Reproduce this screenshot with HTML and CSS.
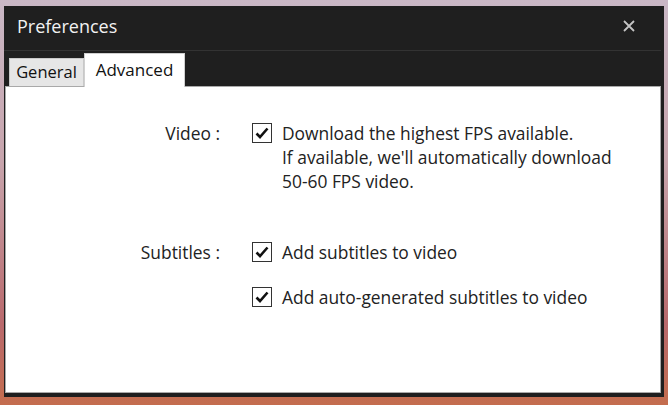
FILE: index.html
```html
<!DOCTYPE html>
<html lang="en">
<head>
    <meta charset="UTF-8">
    <meta name="viewport" content="width=device-width, initial-scale=1.0">
    <title>Preferences</title>
    <link rel="stylesheet" href="styles.css">
</head>
<body>
    <div class="window">
        <div class="titlebar">
            <span class="title">Preferences</span>
            <svg class="close" width="12" height="12" viewBox="0 0 12 12"><path d="M1 1 L11 11 M11 1 L1 11" stroke="#c4c4c4" stroke-width="1.8"/></svg>
        </div>
        <div class="tabs">
            <div class="tab">General</div>
            <div class="tab active">Advanced</div>
        </div>
        <div class="panel">
            <div class="row">
                <div class="label">Video :</div>
                <div class="options">
                    <div class="option">
                        <span class="box">
                            <svg width="14" height="14" viewBox="0 0 14 14"><path d="M1.5 7.5 L5 11 L12.5 2.5" fill="none" stroke="#111" stroke-width="2.6"/></svg>
                        </span>
                        <span class="text">Download the highest FPS available.<br>If available, we'll automatically download<br>50-60 FPS video.</span>
                    </div>
                </div>
            </div>
            <div class="row subs">
                <div class="label">Subtitles :</div>
                <div class="options">
                    <div class="option">
                        <span class="box">
                            <svg width="14" height="14" viewBox="0 0 14 14"><path d="M1.5 7.5 L5 11 L12.5 2.5" fill="none" stroke="#111" stroke-width="2.6"/></svg>
                        </span>
                        <span class="text">Add subtitles to video</span>
                    </div>
                    <div class="option">
                        <span class="box">
                            <svg width="14" height="14" viewBox="0 0 14 14"><path d="M1.5 7.5 L5 11 L12.5 2.5" fill="none" stroke="#111" stroke-width="2.6"/></svg>
                        </span>
                        <span class="text">Add auto-generated subtitles to video</span>
                    </div>
                </div>
            </div>
        </div>
    </div>
</body>
</html>
```

FILE: styles.css
```css
body{
    margin: 0;
    height: 405px;
    overflow: hidden;
    background: linear-gradient(180deg, #cab8c6 0%, #c7a4ac 40%, #b9696c 80%, #c46d4e 100%);
    font-family: "Open Sans", "Noto Sans", sans-serif;
}
.window{
    margin: 6px 4px 0 4px;
    height: 391px;
    background-color: #1f1f1f;
    display: flex;
    flex-direction: column;
    padding-right: 3px;
    padding-bottom: 4px;
    box-sizing: border-box;
}
.titlebar{
    height: 44px;
    display: flex;
    align-items: center;
    justify-content: space-between;
    padding: 0 26px 0 13px;
    border-bottom: 1px solid #333;
}
.title{
    color: #f2f2f2;
    font-size: 18px;
    padding-bottom: 4px;
}
.close{
    margin-bottom: 4px;
}
.tabs{
    height: 35px;
    display: flex;
    align-items: flex-end;
    padding-left: 5px;
}
.tab{
    width: 75px;
    height: 28px;
    background-color: #e6e6e6;
    border: 1px solid #c8c8c8;
    border-bottom: none;
    color: #111;
    font-size: 16.5px;
    line-height: 26px;
    text-align: center;
    box-sizing: border-box;
}
.tab.active{
    width: 101px;
    height: 34px;
    line-height: 32px;
    background-color: #fff;
    border-color: #d0d0d0;
    font-size: 17px;
    position: relative;
    top: 1px;
}
.panel{
    flex: 1;
    margin-left: 1px;
    background-color: #fff;
    border: 1px solid #a9a9a9;
    padding-top: 34px;
}
.row{
    display: flex;
    font-size: 17.4px;
    line-height: 24px;
    color: #222;
}
.row.subs{
    margin-top: 47px;
}
.label{
    width: 214px;
    text-align: right;
}
.options{
    margin-left: 32px;
    display: flex;
    flex-direction: column;
    gap: 21px;
}
.option{
    display: flex;
    align-items: flex-start;
}
.box{
    width: 18px;
    height: 18px;
    margin-top: 2px;
    border: 1px solid #333;
    display: flex;
    align-items: center;
    justify-content: center;
    flex-shrink: 0;
}
.text{
    margin-left: 10px;
}
```
